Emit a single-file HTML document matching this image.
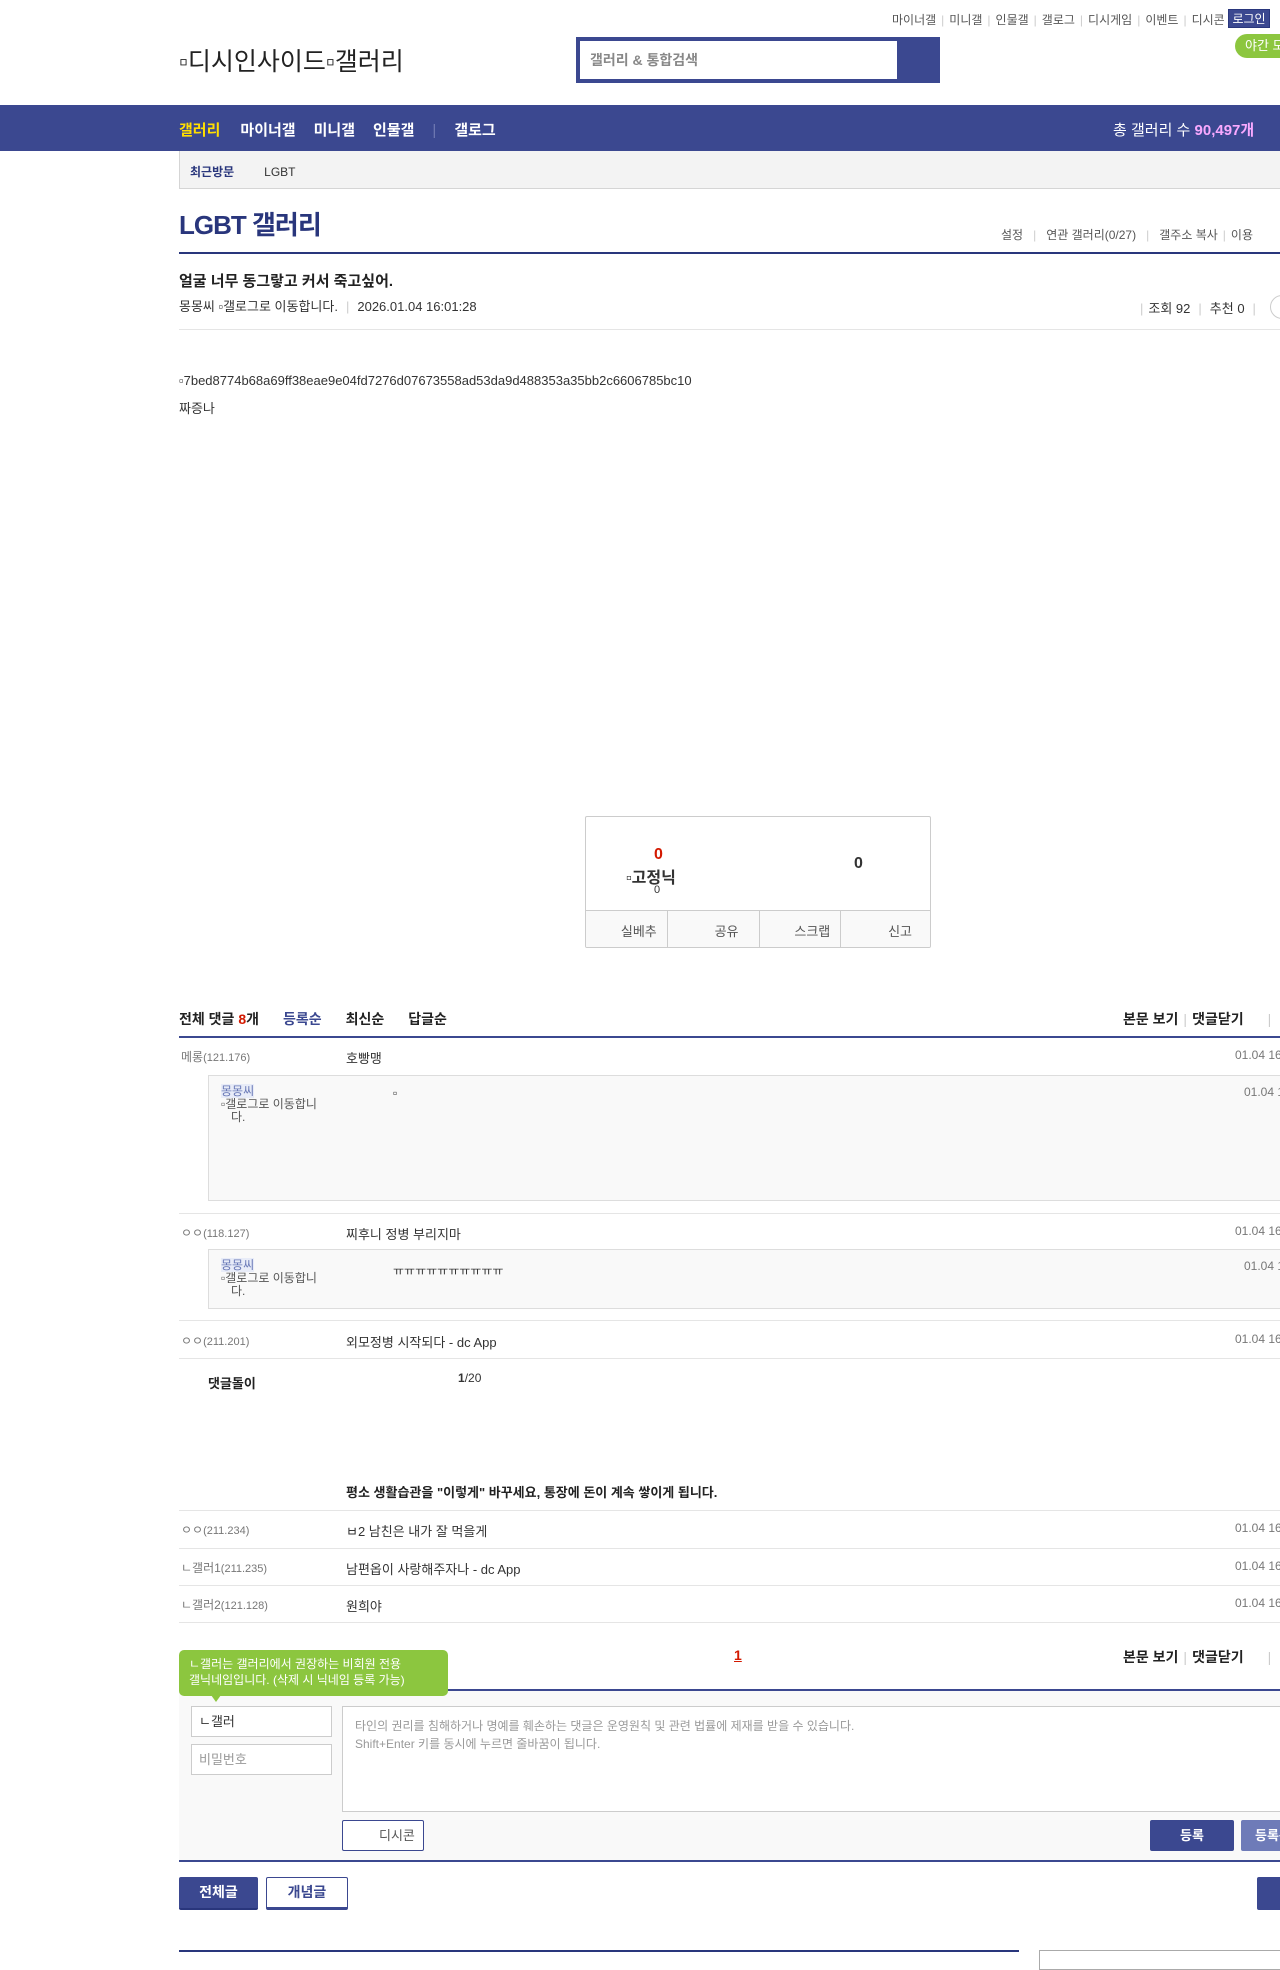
<!DOCTYPE html>
<html><head><meta charset="utf-8"><style>
*{margin:0;padding:0;box-sizing:border-box}
body{width:1280px;height:1959px;overflow:hidden;position:relative;background:#fff;font-family:"Liberation Sans","Noto Sans CJK KR",sans-serif;color:#333;font-size:13px}
.a{position:absolute;white-space:nowrap}
.b{font-weight:bold}
.line{position:absolute;height:1px;background:#e5e5e5}
.gray{color:#777}
.sep{color:#ccc;margin:0 5px}
</style></head><body>
<!-- top links -->
<div class="a" style="top:11px;left:892px;font-size:12px;color:#555">마이너갤<span class="sep">|</span>미니갤<span class="sep">|</span>인물갤<span class="sep">|</span>갤로그<span class="sep">|</span>디시게임<span class="sep">|</span>이벤트<span class="sep">|</span>디시콘</div>
<div class="a" style="top:9px;left:1228px;width:42px;height:19px;background:#3b4890;color:#fff;font-size:12px;line-height:19px;text-align:center;border:1px solid #29367c">로그인</div>
<div class="a" style="top:34px;left:1235px;width:60px;height:24px;background:#8cc63f;border-radius:12px;color:#fff;font-size:13px;line-height:24px;padding-left:10px">야간 모드</div>
<div class="a" style="top:42px;left:179px;font-size:25px;color:#222">▫디시인사이드▫갤러리</div>
<div class="a" style="top:37px;left:576px;width:364px;height:46px;background:#3b4890;padding:4px">
<div style="width:317px;height:38px;background:#fff;font-size:14px;color:#888;font-weight:bold;line-height:38px;padding-left:10px">갤러리 &amp; 통합검색</div></div>
<!-- nav -->
<div class="a" style="top:105px;left:0;width:1280px;height:46px;background:#3b4890"></div>
<div class="a b" style="top:119px;left:179px;font-size:15px;color:#fff"><span style="color:#ffde00">갤러리</span><span style="margin-left:20px">마이너갤</span><span style="margin-left:18px">미니갤</span><span style="margin-left:18px">인물갤</span><span style="margin-left:18px;color:#6f7ab3;font-weight:normal">|</span><span style="margin-left:18px">갤로그</span></div>
<div class="a" style="top:119px;left:1113px;font-size:15px;color:#fff">총 갤러리 수 <b style="color:#f9a9ff">90,497개</b></div>
<div class="a" style="top:151px;left:179px;width:1120px;height:38px;background:#f3f3f3;border:1px solid #d5d5d5;border-top:none"></div>
<div class="a" style="top:163px;left:190px;font-size:12px;color:#29367c" ><b>최근방문</b><span style="margin-left:30px;color:#333">LGBT</span></div>
<!-- title -->
<div class="a b" style="top:205px;left:179px;font-size:26px;color:#29367c;letter-spacing:-1px">LGBT 갤러리</div>
<div class="a" style="top:226px;left:1001px;font-size:12px;color:#555">설정<span class="sep" style="margin:0 10px">|</span>연관 갤러리(0/27)<span class="sep" style="margin:0 10px">|</span>갤주소 복사<span class="sep">|</span>이용</div>
<div class="a" style="top:252px;left:179px;width:1110px;height:2px;background:#29367c"></div>
<div class="a b" style="top:270px;left:179px;font-size:15px;color:#222">얼굴 너무 동그랗고 커서 죽고싶어.</div>
<div class="a" style="top:296px;left:179px;font-size:13px;color:#333">몽몽씨 ▫갤로그로 이동합니다.<span class="sep" style="margin:0 8px">|</span>2026.01.04 16:01:28</div>
<div class="a" style="top:298px;left:1135px;font-size:13px;color:#333"><span class="sep">|</span>조회 92<span class="sep" style="margin:0 8px">|</span>추천 0<span class="sep" style="margin:0 8px">|</span></div>
<div class="a" style="top:295px;left:1270px;width:26px;height:24px;border:1px solid #ccc;border-radius:12px"></div>
<div class="line" style="top:329px;left:179px;width:1110px"></div>
<div class="a" style="top:373px;left:179px;font-size:13px">▫7bed8774b68a69ff38eae9e04fd7276d07673558ad53da9d488353a35bb2c6606785bc10</div>
<div class="a" style="top:398px;left:179px;font-size:13px">짜증나</div>
<!-- recommend box -->
<div class="a" style="top:816px;left:585px;width:346px;height:132px;border:1px solid #ccc;border-radius:2px;overflow:hidden">
<div class="a b" style="top:29px;left:68px;font-size:16px;color:#d31900">0</div>
<div class="a b" style="top:47px;left:40px;font-size:16px;color:#333">▫고정닉</div>
<div class="a" style="top:67px;left:68px;font-size:11px">0</div>
<div class="a b" style="top:38px;left:268px;font-size:16px;color:#333">0</div>
<div class="a" style="top:93px;left:0;width:346px;height:39px;background:#f9f9f9;border-top:1px solid #ccc;display:flex;font-size:13px;color:#555">
<div style="flex:1;border-right:1px solid #ccc;text-align:right;padding:10px 10px 0 0">실베추</div>
<div style="flex:1;border-right:1px solid #ccc;text-align:right;padding:10px 20px 0 0">공유</div>
<div style="flex:1;border-right:1px solid #ccc;text-align:right;padding:10px 10px 0 0">스크랩</div>
<div style="flex:1;text-align:right;padding:10px 20px 0 0">신고</div></div></div>
<!-- comments -->
<div class="a b" style="top:1009px;left:179px;font-size:14px;color:#222">전체 댓글 <span style="color:#d31900">8</span>개<span style="margin-left:24px;color:#3b4890">등록순</span><span style="margin-left:24px">최신순</span><span style="margin-left:24px">답글순</span></div>
<div class="a b" style="top:1009px;left:1123px;font-size:14px;color:#222">본문 보기<span class="sep" style="font-weight:normal">|</span>댓글닫기<span class="sep" style="margin-left:24px;font-weight:normal">|</span></div>
<div class="a" style="top:1036px;left:179px;width:1110px;height:2px;background:#3b4890"></div>
<div class="a gray" style="top:1048px;left:181px;font-size:12px">메롱<span style="font-size:11px">(121.176)</span></div>
<div class="a" style="top:1048px;left:346px;font-size:13px">호빵맹</div>
<div class="a gray" style="top:1048px;left:1235px;font-size:12px">01.04 16:</div>
<div class="a" style="top:1075px;left:208px;width:1100px;height:126px;background:#f9f9f9;border:1px solid #ddd"></div>
<div class="a" style="top:1085px;left:221px;font-size:12px;line-height:13px;color:#555"><span style="background:#e8ecf8;color:#6878b6">몽몽씨</span><br>▫갤로그로 이동합니<br>&nbsp;&nbsp;&nbsp;다.</div>
<div class="a" style="top:1086px;left:393px;font-size:12px">▫</div>
<div class="a gray" style="top:1085px;left:1244px;font-size:12px">01.04 1</div>
<div class="line" style="top:1213px;left:179px;width:1110px"></div>
<div class="a gray" style="top:1224px;left:181px;font-size:12px">ㅇㅇ<span style="font-size:11px">(118.127)</span></div>
<div class="a" style="top:1224px;left:346px;font-size:13px">찌후니 정병 부리지마</div>
<div class="a gray" style="top:1224px;left:1235px;font-size:12px">01.04 16:</div>
<div class="a" style="top:1249px;left:208px;width:1100px;height:60px;background:#f9f9f9;border:1px solid #ddd"></div>
<div class="a" style="top:1259px;left:221px;font-size:12px;line-height:13px;color:#555"><span style="background:#e8ecf8;color:#6878b6">몽몽씨</span><br>▫갤로그로 이동합니<br>&nbsp;&nbsp;&nbsp;다.</div>
<div class="a" style="top:1262px;left:393px;font-size:12px">ㅠㅠㅠㅠㅠㅠㅠㅠㅠㅠ</div>
<div class="a gray" style="top:1259px;left:1244px;font-size:12px">01.04 1</div>
<div class="line" style="top:1320px;left:179px;width:1110px"></div>
<div class="a gray" style="top:1332px;left:181px;font-size:12px">ㅇㅇ<span style="font-size:11px">(211.201)</span></div>
<div class="a" style="top:1332px;left:346px;font-size:13px">외모정병 시작되다 - dc App</div>
<div class="a gray" style="top:1332px;left:1235px;font-size:12px">01.04 16:</div>
<div class="line" style="top:1358px;left:179px;width:1110px"></div>
<div class="a b" style="top:1373px;left:208px;font-size:13px;color:#222">댓글돌이</div>
<div class="a" style="top:1371px;left:458px;font-size:12px"><b>1</b>/20</div>
<div class="a b" style="top:1482px;left:346px;font-size:13px;color:#222">평소 생활습관을 "이렇게" 바꾸세요, 통장에 돈이 계속 쌓이게 됩니다.</div>
<div class="line" style="top:1510px;left:179px;width:1110px"></div>
<div class="a gray" style="top:1521px;left:181px;font-size:12px">ㅇㅇ<span style="font-size:11px">(211.234)</span></div>
<div class="a" style="top:1521px;left:346px;font-size:13px">ㅂ2 남친은 내가 잘 먹을게</div>
<div class="a gray" style="top:1521px;left:1235px;font-size:12px">01.04 16:</div>
<div class="line" style="top:1548px;left:179px;width:1110px"></div>
<div class="a gray" style="top:1559px;left:181px;font-size:12px">ㄴ갤러1<span style="font-size:11px">(211.235)</span></div>
<div class="a" style="top:1559px;left:346px;font-size:13px">남편옵이 사랑해주자나 - dc App</div>
<div class="a gray" style="top:1559px;left:1235px;font-size:12px">01.04 16:</div>
<div class="line" style="top:1585px;left:179px;width:1110px"></div>
<div class="a gray" style="top:1596px;left:181px;font-size:12px">ㄴ갤러2<span style="font-size:11px">(121.128)</span></div>
<div class="a" style="top:1596px;left:346px;font-size:13px">원희야</div>
<div class="a gray" style="top:1596px;left:1235px;font-size:12px">01.04 16:</div>
<div class="line" style="top:1622px;left:179px;width:1110px"></div>
<div class="a b" style="top:1647px;left:734px;font-size:14px;color:#d31900;text-decoration:underline">1</div>
<div class="a b" style="top:1647px;left:1123px;font-size:14px;color:#222">본문 보기<span class="sep" style="font-weight:normal">|</span>댓글닫기<span class="sep" style="margin-left:24px;font-weight:normal">|</span></div>
<!-- write -->
<div class="a" style="top:1689px;left:179px;width:1110px;height:173px;background:#f9f9f9;border-top:2px solid #3b4890;border-bottom:2px solid #3b4890"></div>
<div class="a" style="top:1650px;left:179px;width:269px;height:46px;background:#8cc63f;border-radius:5px;color:#fff;font-size:12px;line-height:16px;padding:6px 10px">ㄴ갤러는 갤러리에서 권장하는 비회원 전용<br>갤닉네임입니다. (삭제 시 닉네임 등록 가능)</div>
<div class="a" style="top:1695px;left:211px;width:0;height:0;border-left:5px solid transparent;border-right:5px solid transparent;border-top:7px solid #8cc63f"></div>
<div class="a" style="top:1706px;left:191px;width:141px;height:31px;background:#fff;border:1px solid #ccc;font-size:13px;color:#333;line-height:29px;padding-left:7px">ㄴ갤러</div>
<div class="a" style="top:1744px;left:191px;width:141px;height:31px;background:#fff;border:1px solid #ccc;font-size:13px;color:#999;line-height:29px;padding-left:7px">비밀번호</div>
<div class="a" style="top:1706px;left:342px;width:960px;height:106px;background:#fff;border:1px solid #ccc;font-size:12px;color:#999;line-height:18px;padding:10px 12px">타인의 권리를 침해하거나 명예를 훼손하는 댓글은 운영원칙 및 관련 법률에 제재를 받을 수 있습니다.<br>Shift+Enter 키를 동시에 누르면 줄바꿈이 됩니다.</div>
<div class="a" style="top:1820px;left:342px;width:82px;height:31px;background:#fff;border:1px solid #3b4890;border-radius:2px;font-size:13px;color:#555;line-height:29px;padding-left:36px">디시콘</div>
<div class="a b" style="top:1820px;left:1150px;width:84px;height:31px;background:#3b4890;border-radius:2px;color:#fff;font-size:13px;line-height:31px;text-align:center">등록</div>
<div class="a b" style="top:1820px;left:1241px;width:84px;height:31px;background:#6e7bb8;border-radius:2px;color:#fff;font-size:13px;line-height:31px;padding-left:14px">등록+추천</div>
<div class="a b" style="top:1877px;left:179px;width:79px;height:33px;background:#3b4890;border-radius:2px;border-bottom:2px solid #29367c;color:#fff;font-size:14px;line-height:31px;text-align:center">전체글</div>
<div class="a b" style="top:1877px;left:266px;width:82px;height:33px;background:#fff;border:1px solid #3b4890;border-bottom:3px solid #3b4890;border-radius:2px;color:#3b4890;font-size:14px;line-height:29px;text-align:center">개념글</div>
<div class="a" style="top:1877px;left:1257px;width:60px;height:33px;background:#3b4890;border-radius:2px"></div>
<div class="a" style="top:1950px;left:179px;width:840px;height:2px;background:#29367c"></div>
<div class="a" style="top:1950px;left:1039px;width:260px;height:20px;border:1px solid #aaa"></div>
</body></html>
